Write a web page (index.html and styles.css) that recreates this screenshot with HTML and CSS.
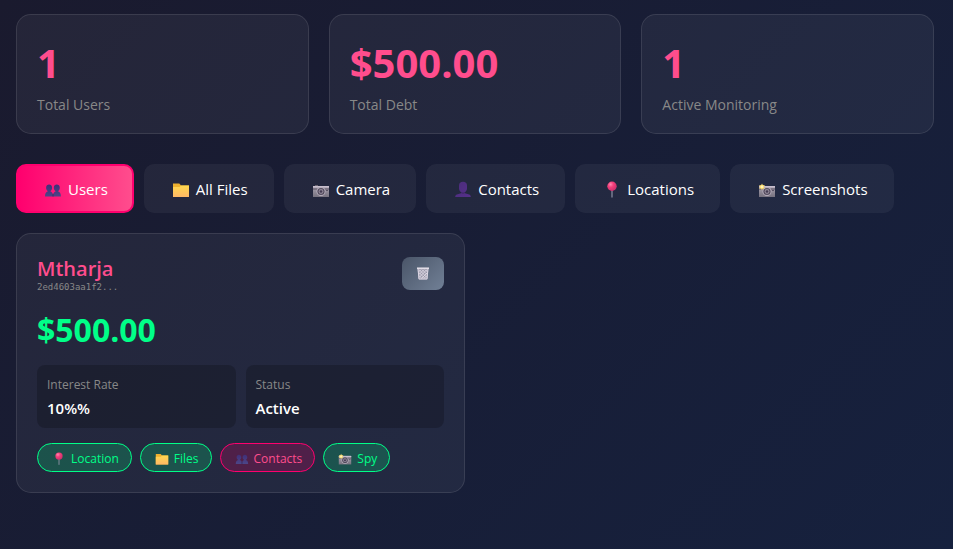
FILE: index.html
```html
<!DOCTYPE html>
<html lang="en">
<head>
<meta charset="utf-8">
<meta name="viewport" content="width=device-width, initial-scale=1">
<title>Dashboard</title>
<link rel="stylesheet" href="styles.css">
</head>
<body>
<svg class="sprite" aria-hidden="true">
  <defs>
    <linearGradient id="g-people" x1="0" y1="0" x2="0" y2="1"><stop offset="0" stop-color="#402f78"/><stop offset="1" stop-color="#4c4688"/></linearGradient>
    <linearGradient id="g-person" x1="0" y1="0" x2="1" y2="1"><stop offset="0" stop-color="#4b2d7a"/><stop offset="1" stop-color="#56308c"/></linearGradient>
    <linearGradient id="g-folder" x1="0" y1="0" x2="0" y2="1"><stop offset="0" stop-color="#ffd84e"/><stop offset="1" stop-color="#ffb866"/></linearGradient>
    <radialGradient id="g-pin" cx=".35" cy=".3" r=".75"><stop offset="0" stop-color="#ff86b0"/><stop offset=".4" stop-color="#f43f7a"/><stop offset="1" stop-color="#c62e6b"/></radialGradient>
    <linearGradient id="g-cam" x1="0" y1="0" x2="0" y2="1"><stop offset="0" stop-color="#aaa3b0"/><stop offset="1" stop-color="#77727f"/></linearGradient>
    <symbol id="i-people" viewBox="0 0 18 18">
      <g fill="url(#g-people)"><path d="M9 15.500c0-3.200 1-4.700 2.700-5.300-1.300-.9-1.900-2-1.900-3.400 0-2 1.300-3.200 3-3.200s3 1.200 3 3.200c0 1.400-.6 2.600-1.800 3.400 2 .6 2.900 2.200 2.900 5.300z"/><path d="M1 15.500c0-3.200 1-4.700 2.900-5.300C2.700 9.300 2.100 8.200 2.100 6.800c0-2 1.300-3.200 3-3.200s3 1.200 3 3.200c0 1.400-.6 2.500-1.800 3.400 1.900.6 2.700 2.100 2.700 5.300z"/></g>
      <path d="M9 15.500v-2.700" stroke="#302758" stroke-width=".8"/>
    </symbol>
    <symbol id="i-person" viewBox="0 0 18 18">
      <path fill="url(#g-person)" d="M5 4.400C5 2 6.600.8 9 .8s4 1.200 4 3.600v3.200c0 1.600-.8 2.800-2 3.500v1.200l4.100 1.200c1 .3 1.500 1.200 1.700 2.500H1.200c.2-1.300.7-2.200 1.700-2.500L7 12.300v-1.200c-1.200-.7-2-1.900-2-3.500z"/>
      <path fill="#38245d" d="M7 11.200q2 .9 4 0v.8q-2 1-4 0z"/>
    </symbol>
    <symbol id="i-folder" viewBox="0 0 18 18">
      <path fill="#eeb02f" d="M1 2.500h6.300l1.800 2H17v11.500H1z"/>
      <path fill="url(#g-folder)" d="M1 6h6.500l1.700-1.500H17V16H1z"/>
    </symbol>
    <symbol id="i-pin" viewBox="0 0 18 18">
      <path d="M9 9v7.500" stroke="#8d91a5" stroke-width="1.200"/>
      <circle cx="9" cy="5.300" r="4.700" fill="url(#g-pin)"/>
    </symbol>
    <symbol id="i-camera" viewBox="0 0 18 18">
      <path fill="#69636f" d="M3 5h3V4H3z"/>
      <path fill="url(#g-cam)" d="M1 5h16v11H1z"/>
      <path fill="#c8bfce" d="M1 5h16v1.500H1z"/>
      <path fill="#5a5364" d="M1 7.500h16v1H1zM14 9h2v1h-2z"/>
      <circle cx="9" cy="10.500" r="4.500" fill="#b6adbb"/>
      <circle cx="9" cy="10.500" r="3.600" fill="#534c5e"/>
      <circle cx="9" cy="10.500" r="2.400" fill="#918898"/>
      <circle cx="9" cy="10.500" r="1.300" fill="#443b52"/>
    </symbol>
    <symbol id="i-flash" viewBox="0 0 18 18">
      <use href="#i-camera"/>
      <path fill="#ffdf6b" d="m4 2.400.9 1.900 2-.2-1.200 1.700 1.100 1.700-2-.1L4 9.200 3.100 7.400 1 7.500l1.200-1.700L1 4.100l2.100.2z"/>
      <circle cx="4" cy="5.800" r="1.200" fill="#fff4bb"/>
    </symbol>
    <symbol id="i-trash" viewBox="0 0 14 14">
      <path fill="#9a98a9" d="m1.500 2 1 11h9l1-11z"/>
      <path d="m3 3 8 8M6 3l5 5M9 3l2.500 2.500M3 6l6 6M3 9l3 3M11 3l-8 8M8 3 3 8M5 3 2.500 5.500M11.500 6l-6 6M11 9l-3 3" stroke="#e4deea" stroke-width=".8"/>
      <path d="m2 2 1 10.500h8L12 2" fill="none" stroke="#ddd7e4"/>
      <path fill="#eee8f1" d="M1 1h12v1.400H1z"/>
    </symbol>
  </defs>
</svg>

<main class="dashboard">
  <section class="stats" aria-label="Summary">
    <div class="panel stat"><div class="stat-value">1</div><div class="stat-label">Total Users</div></div>
    <div class="panel stat"><div class="stat-value">$500.00</div><div class="stat-label">Total Debt</div></div>
    <div class="panel stat"><div class="stat-value">1</div><div class="stat-label">Active Monitoring</div></div>
  </section>

  <nav class="tabs" aria-label="Sections">
    <button class="tab active" type="button"><svg class="icon"><use href="#i-people"/></svg>Users</button>
    <button class="tab" type="button"><svg class="icon"><use href="#i-folder"/></svg>All Files</button>
    <button class="tab" type="button"><svg class="icon"><use href="#i-camera"/></svg>Camera</button>
    <button class="tab" type="button"><svg class="icon"><use href="#i-person"/></svg>Contacts</button>
    <button class="tab" type="button"><svg class="icon"><use href="#i-pin"/></svg>Locations</button>
    <button class="tab" type="button"><svg class="icon"><use href="#i-flash"/></svg>Screenshots</button>
  </nav>

  <section class="users" aria-label="Users">
    <article class="panel">
      <header class="user-header">
        <div>
          <h2 class="user-name">Mtharja</h2>
          <div class="user-id">2ed4603aa1f2...</div>
        </div>
        <button class="delete" type="button" aria-label="Delete"><svg class="trash"><use href="#i-trash"/></svg></button>
      </header>
      <div class="debt">$500.00</div>
      <dl class="facts">
        <div class="fact"><dt>Interest Rate</dt><dd>10%%</dd></div>
        <div class="fact"><dt>Status</dt><dd>Active</dd></div>
      </dl>
      <div class="chips">
        <span class="chip"><svg class="icon-small"><use href="#i-pin"/></svg>Location</span>
        <span class="chip"><svg class="icon-small"><use href="#i-folder"/></svg>Files</span>
        <span class="chip denied"><svg class="icon-small"><use href="#i-people"/></svg>Contacts</span>
        <span class="chip"><svg class="icon-small"><use href="#i-flash"/></svg>Spy</span>
      </div>
    </article>
  </section>
</main>
</body>
</html>
```
FILE: styles.css
```css
* {
  box-sizing: border-box;
  margin: 0;
  padding: 0;
}

body {
  min-height: 100vh;
  padding: 14px 19px 20px 16px;
  background: linear-gradient(135deg, #1a1a2e 0%, #16213e 100%);
  color: #fff;
  font-family: "Segoe UI", "Open Sans", "Noto Sans", sans-serif;
}

.sprite {
  position: absolute;
  width: 0;
  height: 0;
}

.panel {
  padding: 20px;
  border: 1px solid rgba(255, 255, 255, 0.1);
  border-radius: 15px;
  background: rgba(255, 255, 255, 0.05);
}

.stats {
  display: grid;
  grid-template-columns: repeat(auto-fit, minmax(200px, 1fr));
  gap: 20px;
  margin-bottom: 30px;
}

.stat {
  padding: 21px 20px 19px;
}

.stat-value {
  color: #ff4d8d;
  font-size: 40px;
  font-weight: 700;
  line-height: 54px;
}

.stat-label {
  margin-top: 5px;
  color: #888;
  font-size: 14px;
  line-height: 19px;
}

.tabs {
  display: flex;
  flex-wrap: wrap;
  gap: 10px;
  margin-bottom: 20px;
}

.tab {
  display: flex;
  align-items: center;
  gap: 6px;
  padding: 13px 24px 11px 26px;
  border: 2px solid transparent;
  border-radius: 10px;
  background: rgba(255, 255, 255, 0.05);
  color: #fff;
  font-family: inherit;
  font-size: 15px;
  line-height: 21px;
  cursor: pointer;
}

.tab.active {
  border-color: #ff006e;
  background: linear-gradient(90deg, #ff006e, #ff4d8d);
}

.icon {
  width: 18px;
  height: 18px;
}

.users {
  display: grid;
  grid-template-columns: repeat(auto-fill, minmax(350px, 1fr));
  gap: 20px;
}

.user-header {
  display: flex;
  align-items: center;
  justify-content: space-between;
  margin-bottom: 17px;
}

.user-name {
  margin-bottom: -2px;
  color: #ff4d8d;
  font-size: 20px;
  font-weight: 600;
  line-height: 30px;
}

.user-id {
  color: #888;
  font-family: "DejaVu Sans Mono", monospace;
  font-size: 9px;
  line-height: 10px;
}

.delete {
  display: flex;
  align-items: center;
  justify-content: center;
  padding: 9px 14px;
  border: 0;
  border-radius: 8px;
  background: linear-gradient(135deg, #4a5568, #718096);
  cursor: pointer;
}

.trash {
  width: 14px;
  height: 15px;
}

.debt {
  margin-bottom: 14px;
  color: #00ff88;
  font-size: 32px;
  font-weight: 700;
  line-height: 42px;
}

.facts {
  display: grid;
  grid-template-columns: 1fr 1fr;
  gap: 10px;
  margin-bottom: 15px;
}

.fact {
  padding: 10px;
  border-radius: 8px;
  background: rgba(0, 0, 0, 0.2);
}

.fact dt {
  margin-bottom: 3px;
  color: #888;
  font-size: 12px;
  line-height: 20px;
}

.fact dd {
  font-size: 15px;
  font-weight: 600;
  line-height: 20px;
}

.chips {
  display: flex;
  flex-wrap: wrap;
  gap: 8px;
}

.chip {
  display: flex;
  align-items: center;
  gap: 5px;
  padding: 6px 12px 3px 14px;
  border: 1px solid #00ff88;
  border-radius: 20px;
  background: rgba(0, 255, 136, 0.2);
  color: #00ff88;
  font-size: 12px;
  line-height: 18px;
}

.chip.denied {
  border-color: #ff006e;
  background: rgba(255, 0, 110, 0.2);
  color: #ff4d8d;
}

.icon-small {
  width: 14px;
  height: 14px;
}
```
